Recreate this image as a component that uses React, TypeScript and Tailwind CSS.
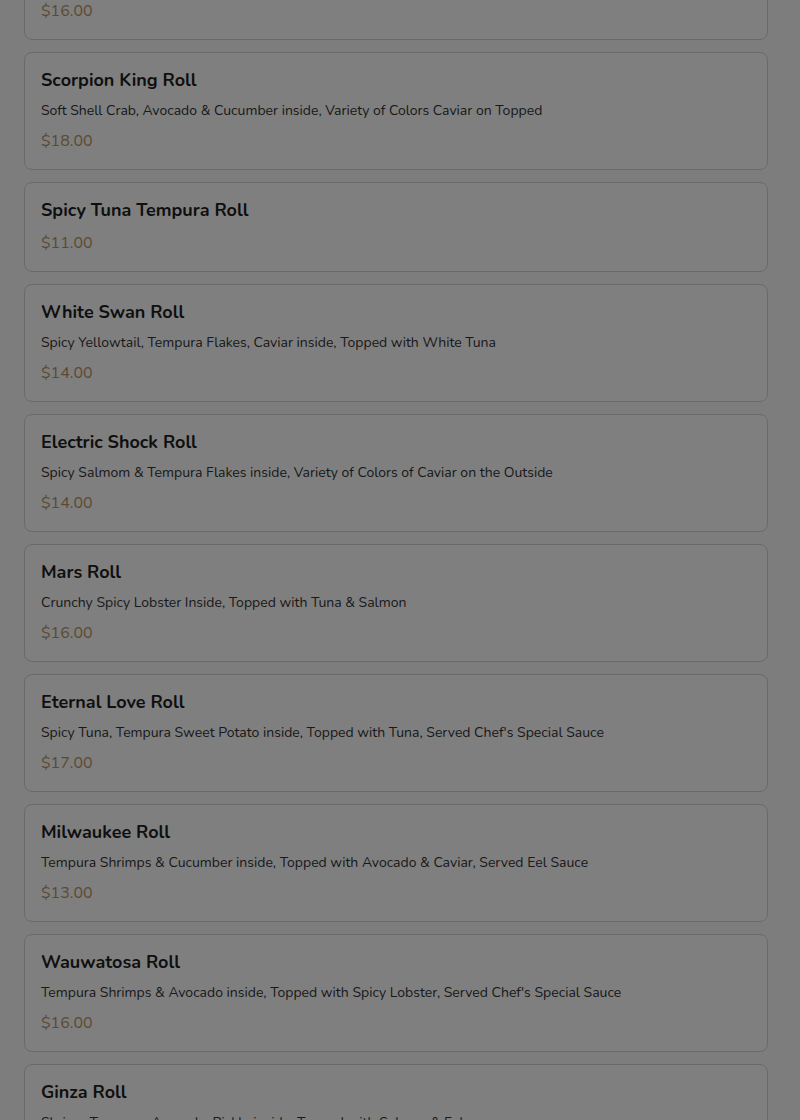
import React from "react";

type Roll = { name: string; desc?: string; price: string };

const rolls: Roll[] = [
  { name: "Dragon Roll", desc: "Shrimp Tempura, Cucumber inside, Topped with Eel & Avocado", price: "$16.00" },
  { name: "Scorpion King Roll", desc: "Soft Shell Crab, Avocado & Cucumber inside, Variety of Colors Caviar on Topped", price: "$18.00" },
  { name: "Spicy Tuna Tempura Roll", price: "$11.00" },
  { name: "White Swan Roll", desc: "Spicy Yellowtail, Tempura Flakes, Caviar inside, Topped with White Tuna", price: "$14.00" },
  { name: "Electric Shock Roll", desc: "Spicy Salmom & Tempura Flakes inside, Variety of Colors of Caviar on the Outside", price: "$14.00" },
  { name: "Mars Roll", desc: "Crunchy Spicy Lobster Inside, Topped with Tuna & Salmon", price: "$16.00" },
  { name: "Eternal Love Roll", desc: "Spicy Tuna, Tempura Sweet Potato inside, Topped with Tuna, Served Chef's Special Sauce", price: "$17.00" },
  { name: "Milwaukee Roll", desc: "Tempura Shrimps & Cucumber inside, Topped with Avocado & Caviar, Served Eel Sauce", price: "$13.00" },
  { name: "Wauwatosa Roll", desc: "Tempura Shrimps & Avocado inside, Topped with Spicy Lobster, Served Chef's Special Sauce", price: "$16.00" },
  { name: "Ginza Roll", desc: "Shrimp Tempura, Avocado, Pickle inside, Topped with Salmon & Eel", price: "$15.00" },
];

function RollCard({ roll }: { roll: Roll }) {
  return (
    <div className="rounded-lg border border-[#d4d4d4] bg-white p-4">
      <h3 className="mb-[10px] text-[18px] font-bold leading-[22px] text-[#1f1f1f]">{roll.name}</h3>
      {roll.desc ? (
        <p className="mb-2 text-[14px] leading-[20px] text-[#333333]">{roll.desc}</p>
      ) : null}
      <div className="text-[16px] leading-[24px] text-[#b8955f]">{roll.price}</div>
    </div>
  );
}

export default function App() {
  return (
    <div
      className="relative h-[1120px] overflow-hidden bg-[#fafafa]"
      style={{ fontFamily: "Nunito, 'Noto Sans', Lato, sans-serif" }}
    >
      <div className="mt-[-78px] flex flex-col gap-3 pl-6 pr-8">
        {rolls.map((r) => (
          <RollCard key={r.name} roll={r} />
        ))}
      </div>
      <div className="absolute inset-0 bg-black/50" />
    </div>
  );
}
